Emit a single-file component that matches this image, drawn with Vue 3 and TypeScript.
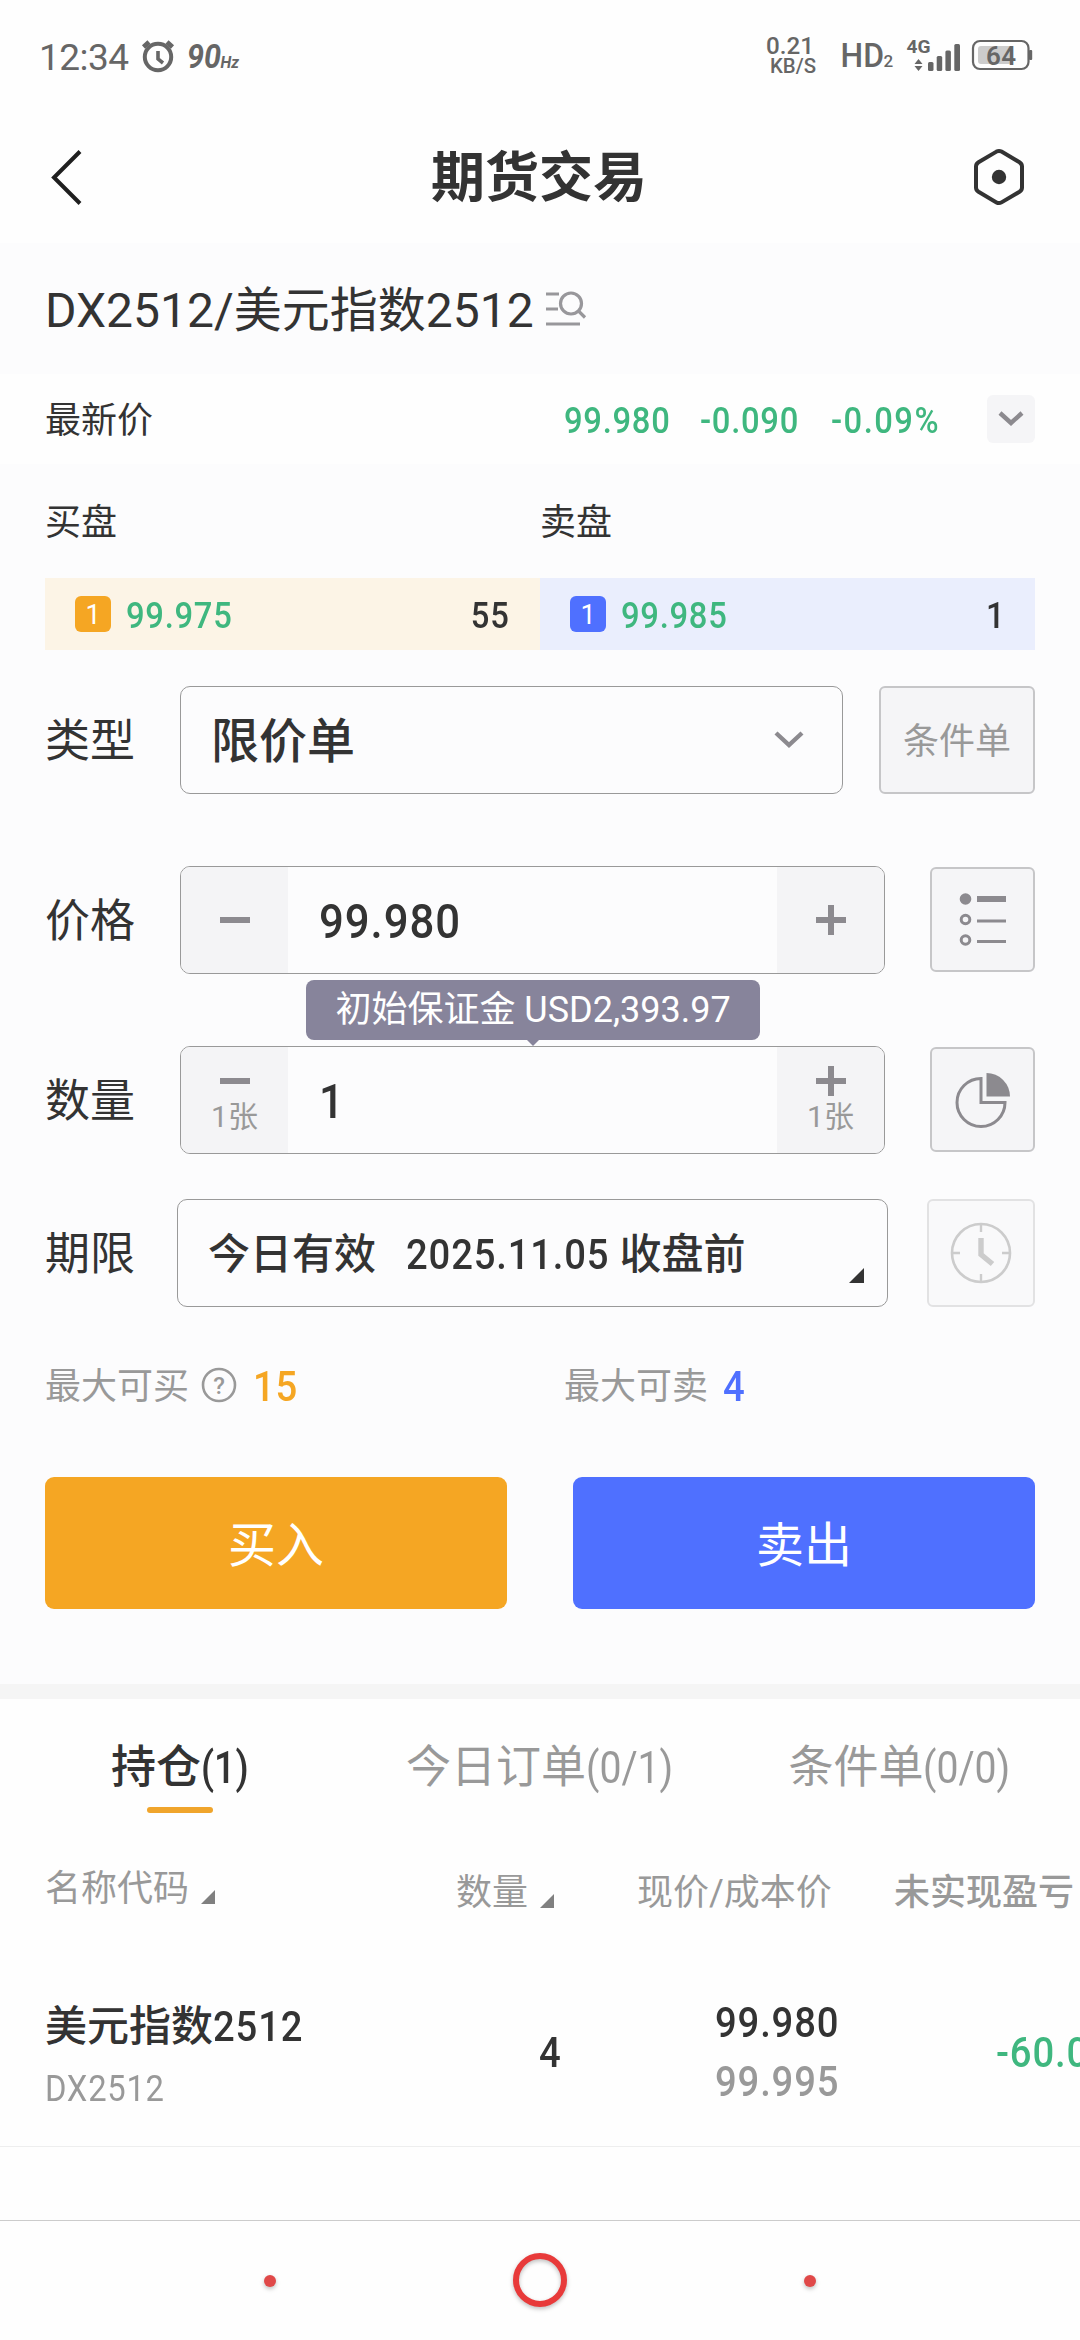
<script setup lang="ts">
interface Level {
  side: 'buy' | 'sell'
  level: number
  price: string
  volume: number
}

interface Tab {
  name: string
  count: string
  active: boolean
}

const levels: Level[] = [
  { side: 'buy', level: 1, price: '99.975', volume: 55 },
  { side: 'sell', level: 1, price: '99.985', volume: 1 },
]

const tabs: Tab[] = [
  { name: '持仓', count: '(1)', active: true },
  { name: '今日订单', count: '(0/1)', active: false },
  { name: '条件单', count: '(0/0)', active: false },
]
</script>

<template>
  <div class="screen">
    <div class="status">
      <span class="clock">12:34</span>
      <svg class="status-left" width="104" height="40" viewBox="138 36 104 40">
        <g fill="none" stroke="#666" stroke-width="4">
          <circle cx="158" cy="57" r="13.2" />
          <path d="M158 51v8l5 4" stroke-width="3.6" />
          <path d="M143.500 47l5.500-5M172.500 47l-5.500-5" stroke-width="4.600" />
        </g>
        <g fill="#666" font-family="Roboto, sans-serif" font-style="italic" font-weight="700">
          <text x="187" y="68" font-size="34" textLength="34" lengthAdjust="spacingAndGlyphs">90</text>
          <text x="220.500" y="68" font-size="17" textLength="18.500" lengthAdjust="spacingAndGlyphs">Hz</text>
        </g>
      </svg>
      <svg class="status-right" width="272" height="64" viewBox="764 24 272 64">
        <g fill="#666" font-family="Roboto, sans-serif" font-weight="500">
          <text x="766" y="54" font-size="24.500" textLength="48" lengthAdjust="spacingAndGlyphs">0.21</text>
          <text x="770" y="73" font-size="20" textLength="46" lengthAdjust="spacingAndGlyphs">KB/S</text>
          <text x="840.500" y="67" font-size="34" textLength="43.500" lengthAdjust="spacingAndGlyphs">HD</text>
          <text x="883.500" y="67" font-size="17">2</text>
          <text x="906.500" y="53" font-size="19" font-weight="700" textLength="24" lengthAdjust="spacingAndGlyphs">4G</text>
          <path d="M918.500 59l4 5h-8zM918.500 71l4-5h-8z" />
          <rect x="928" y="62" width="5.500" height="9" rx="1.500" />
          <rect x="936.700" y="56" width="5.500" height="15" rx="1.500" />
          <rect x="945.400" y="50.500" width="5.500" height="20.500" rx="1.500" />
          <rect x="954.300" y="44" width="5.700" height="27" rx="1.500" />
          <rect x="978" y="46" width="34" height="18" rx="3" fill="#ccc" />
          <rect x="973" y="41" width="55.500" height="28" rx="7" fill="none" stroke="#666" stroke-width="2.200" />
          <rect x="1029" y="50" width="3.200" height="10" rx="1" />
          <text x="986" y="65" font-size="26" font-weight="600" textLength="30">64</text>
        </g>
      </svg>
    </div>

    <header class="header">
      <svg class="back" width="40" height="60" viewBox="0 0 40 60">
        <path d="M35 4.500L9 30.500L35 56.500" fill="none" stroke="#1f1f1f" stroke-width="4" />
      </svg>
      <h1 class="title">期货交易</h1>
      <svg class="settings" width="60" height="60" viewBox="0 0 60 60">
        <path d="M27.500 4.600Q30 3.200 32.500 4.600L50.500 15.200Q53 16.800 53 19.500V40.500Q53 43.200 50.500 44.800L32.500 55.400Q30 56.800 27.500 55.400L9.500 44.800Q7 43.200 7 40.500V19.500Q7 16.800 9.500 15.200Z" fill="none" stroke="#333" stroke-width="4" />
        <circle cx="30" cy="30" r="7.200" fill="#333" />
      </svg>
    </header>

    <section class="quote">
      <span>DX2512/美元指数2512</span>
      <svg width="48" height="52" viewBox="0 0 48 52">
        <g fill="none" stroke="#98979b" stroke-width="3.200">
          <path d="M5 9h13M5 24h12M5 39h34" />
          <ellipse cx="30" cy="18.500" rx="10.500" ry="10.500" />
          <path d="M37 25.500l7 7" />
        </g>
      </svg>
    </section>

    <section class="latest">
      <span class="latest-name">最新价</span>
      <span class="price"><span class="num">99.980</span></span>
      <span class="change"><span class="num">-0.090</span></span>
      <span class="percent"><span class="num">-0.09%</span></span>
      <button class="expand">
        <svg width="26" height="16" viewBox="0 0 26 16">
          <path d="M2 2l11 10L24 2" fill="none" stroke="#8c8a8f" stroke-width="4.400" />
        </svg>
      </button>
    </section>

    <section class="form">
      <div class="book-names"><span>买盘</span><span>卖盘</span></div>
      <div class="book">
        <div v-for="l in levels" :key="l.side" class="level" :class="l.side">
          <span class="badge"><i>{{ l.level }}</i></span>
          <span class="num level-price">{{ l.price }}</span>
          <span class="num level-volume">{{ l.volume }}</span>
        </div>
      </div>

      <div class="row type-row">
        <label>类型</label>
        <div class="field select">
          <span class="value">限价单</span>
          <svg width="32" height="20" viewBox="0 0 32 20">
            <path d="M3 3l13 12L29 3" fill="none" stroke="#8c8a8f" stroke-width="4.400" />
          </svg>
        </div>
        <button class="side wide">条件单</button>
      </div>

      <div class="row">
        <label>价格</label>
        <div class="field stepper">
          <button class="step"><svg width="30" height="30" viewBox="0 0 30 30"><path d="M0 15h30" stroke="#8c8a8f" stroke-width="6" /></svg></button>
          <span class="value"><span class="num">99.980</span></span>
          <button class="step"><svg width="30" height="30" viewBox="0 0 30 30"><path d="M0 15h30M15 0v30" stroke="#8c8a8f" stroke-width="6" /></svg></button>
        </div>
        <button class="side square">
          <svg width="48" height="56" viewBox="0 0 48 56">
            <g fill="none" stroke="#8c8a8f">
              <circle cx="6.500" cy="7" r="5.800" fill="#8c8a8f" stroke="none" />
              <path d="M18 7h29" stroke-width="6" />
              <g stroke-width="3"><circle cx="6.500" cy="27.500" r="4.300" /><circle cx="6.500" cy="48" r="4.300" /><path d="M18 29h29M18 49.500h29" /></g>
            </g>
          </svg>
        </button>
      </div>

      <div class="row quantity-row">
        <label>数量</label>
        <div class="field stepper">
          <button class="step lot"><svg width="30" height="30" viewBox="0 0 30 30"><path d="M0 15h30" stroke="#8c8a8f" stroke-width="6" /></svg><span>1张</span></button>
          <span class="value"><span class="num">1</span></span>
          <button class="step lot"><svg width="30" height="30" viewBox="0 0 30 30"><path d="M0 15h30M15 0v30" stroke="#8c8a8f" stroke-width="6" /></svg><span>1张</span></button>
        </div>
        <button class="side square">
          <svg width="56" height="56" viewBox="0 0 56 56">
            <path d="M26 6.500A24 24 0 1 0 50 30.500H26Z" fill="none" stroke="#8c8a8f" stroke-width="3" />
            <path d="M31.500 1A23.500 23.500 0 0 1 55 24.500H31.500Z" fill="#8c8a8f" />
          </svg>
        </button>
        <div class="tip">初始保证金 USD2,393.97</div>
      </div>

      <div class="row term-row">
        <label>期限</label>
        <div class="field term">
          <span>今日有效</span>
          <span class="num date">2025.11.05</span>
          <span>收盘前</span>
          <svg width="15" height="15" viewBox="0 0 15 15"><path d="M15 0v15H0z" fill="#333" /></svg>
        </div>
        <button class="side muted">
          <svg width="62" height="62" viewBox="0 0 62 62">
            <g fill="none" stroke="#ccc">
              <circle cx="31" cy="31" r="29" stroke-width="2.600" />
              <path d="M31 2v8M31 52v8M2 31h8M52 31h8" stroke-width="2.400" />
              <path d="M31 16v16.500L42.500 42" stroke-width="5.400" />
            </g>
          </svg>
        </button>
      </div>

      <div class="limits">
        <div class="limit">
          <span>最大可买</span>
          <svg width="36" height="36" viewBox="0 0 36 36">
            <circle cx="18" cy="18" r="16" fill="none" stroke="#999" stroke-width="2.600" />
            <text x="18" y="26.500" text-anchor="middle" font-family="Roboto, sans-serif" font-size="24" font-weight="500" fill="#999">?</text>
          </svg>
          <b class="num max-buy">15</b>
        </div>
        <div class="limit">
          <span>最大可卖</span>
          <b class="num max-sell">4</b>
        </div>
      </div>

      <div class="actions">
        <button class="action buy-btn">买入</button>
        <button class="action sell-btn">卖出</button>
      </div>
    </section>

    <nav class="tabs">
      <div v-for="t in tabs" :key="t.name" class="tab" :class="{ active: t.active }">
        {{ t.name }}<span class="count">{{ t.count }}</span>
      </div>
    </nav>

    <section class="table">
      <div class="grid head">
        <div class="col-name">名称代码<svg width="14" height="14" viewBox="0 0 14 14"><path d="M14 0v14H0z" fill="#808080" /></svg></div>
        <div class="col-qty">数量<svg width="14" height="14" viewBox="0 0 14 14"><path d="M14 0v14H0z" fill="#808080" /></svg></div>
        <div class="col-price">现价/成本价</div>
        <div class="col-pnl">未实现盈亏</div>
      </div>
      <div class="grid position">
        <div class="col-name">
          <span class="name">美元指数<span class="num">2512</span></span>
          <span class="num code">DX2512</span>
        </div>
        <div class="col-qty"><span class="num">4</span></div>
        <div class="col-price"><span class="num">99.980</span><span class="num cost">99.995</span></div>
        <div class="col-pnl"><span class="num">-60.00</span></div>
      </div>
    </section>

    <footer class="navbar">
      <svg width="80" height="80" viewBox="0 0 80 80"><circle class="dot" cx="40" cy="41" r="6" /></svg>
      <svg width="80" height="80" viewBox="0 0 80 80"><circle class="ring" cx="40" cy="40" r="24" /></svg>
      <svg width="80" height="80" viewBox="0 0 80 80"><circle class="dot" cx="40" cy="41" r="6" /></svg>
    </footer>
  </div>
</template>

<style>
body {
  margin: 0;
  background: #fefefe;
  overflow: hidden;
}
</style>

<style scoped>
* {
  box-sizing: border-box;
}

.screen {
  display: flex;
  flex-direction: column;
  width: 1080px;
  height: 2340px;
  overflow: hidden;
  background: #fefefe;
  color: #333;
  font-family: Roboto, "Noto Sans CJK SC", sans-serif;
  font-size: 36px;
  line-height: 1;
  white-space: nowrap;
}

svg {
  display: block;
  flex: none;
}

button {
  display: flex;
  align-items: center;
  justify-content: center;
  padding: 0;
  border: 0;
  font: inherit;
  color: inherit;
}

/* Narrow, slightly spaced figures */
.num {
  display: inline-block;
  font-weight: 500;
  letter-spacing: 0.022em;
  transform: scaleX(0.91);
  transform-origin: left center;
}

.status {
  display: flex;
  align-items: center;
  height: 112px;
  padding: 0 44px 0 39px;
  color: #666;
}

.clock {
  width: 99px;
  padding-top: 2px;
  font-size: 37px;
  letter-spacing: -0.5px;
}

.status-right {
  margin-left: auto;
}

.header {
  display: flex;
  align-items: center;
  justify-content: space-between;
  height: 131px;
  padding: 0 51px 2px 45px;
}

.back {
  margin-right: 24px;
}

.title {
  margin: 0;
  padding-top: 5px;
  font-size: 54px;
  font-weight: 700;
}

.quote {
  display: flex;
  align-items: center;
  gap: 7px;
  height: 131px;
  padding: 4px 45px 0;
  background: #fcfcfd;
  font-size: 48px;
}

.latest {
  display: flex;
  align-items: center;
  height: 90px;
  padding-left: 45px;
  color: #3fb77f;
}

.latest > span {
  padding-top: 3px;
}

.latest-name {
  width: 519px;
  color: #333;
}

.price {
  width: 136px;
}

.change {
  width: 131px;
}

.percent {
  width: 156px;
}

.percent .num {
  letter-spacing: 0.045em;
}

.expand {
  width: 48px;
  height: 48px;
  border-radius: 6px;
  background: #f5f5f7;
}

.form {
  height: 1220px;
  padding: 0 45px;
  background: #fcfcfd;
}

.book-names {
  display: flex;
  align-items: center;
  height: 114px;
  padding-top: 3px;
}

.book-names span {
  flex: 1;
}

.book {
  display: flex;
  height: 72px;
}

.level {
  display: flex;
  align-items: center;
  flex: 1;
  padding: 0 30px;
}

.level.buy {
  background: #fcf4e6;
}

.level.sell {
  background: #eaeefd;
}

.badge {
  display: flex;
  align-items: center;
  justify-content: center;
  width: 36px;
  height: 36px;
  margin-right: 15px;
  border-radius: 6px;
  background: #f5a623;
  color: #fff;
  font-size: 27px;
}

.badge i {
  padding-top: 2px;
  font-style: normal;
}

.sell .badge {
  background: #4f70ff;
}

.level-price {
  padding-top: 3px;
  color: #3fb77f;
}

.level-volume {
  margin-left: auto;
  padding-top: 3px;
  transform-origin: right center;
}

.row {
  position: relative;
  display: flex;
  align-items: center;
  height: 108px;
  margin-top: 72px;
}

.row.type-row {
  margin-top: 36px;
}

.row.term-row {
  margin-top: 45px;
}

.row label {
  width: 135px;
  padding-top: 3px;
  font-size: 45px;
}

.term-row label {
  width: 132px;
}

.field {
  display: flex;
  align-items: center;
  height: 108px;
  border: 1px solid #999;
  border-radius: 10px;
  overflow: hidden;
}

.value {
  padding-top: 4px;
  font-size: 48px;
  font-weight: 500;
}

.select {
  justify-content: space-between;
  width: 663px;
  padding: 0 37px 0 30px;
}

.stepper {
  width: 705px;
}

.step {
  width: 107px;
  height: 106px;
  background: #f4f4f6;
}

.stepper .value {
  flex: 1;
  padding-left: 31px;
}

.lot {
  flex-direction: column;
  justify-content: flex-start;
  padding-top: 19px;
  color: #999;
  font-size: 30px;
}

.lot span {
  margin-top: 6px;
}

.side {
  height: 108px;
  margin-left: auto;
  border: 2px solid #c6c6c8;
  border-radius: 6px;
  background: #f5f5f7;
  color: #999;
}

.wide {
  width: 156px;
  padding-top: 3px;
}

.square {
  width: 105px;
  height: 105px;
  margin-bottom: 1px;
}

.side.muted {
  width: 108px;
  border-color: #e2e2e3;
  background: #f9f9fa;
}

.tip {
  position: absolute;
  left: 261px;
  top: -66px;
  width: 454px;
  height: 60px;
  border-radius: 8px;
  background: #87849b;
  color: #fff;
  line-height: 60px;
  text-align: center;
}

.tip::after {
  content: "";
  position: absolute;
  left: 221px;
  top: 60px;
  border: 6px solid transparent;
  border-top-color: #87849b;
  border-bottom-width: 0;
}

.term {
  width: 711px;
  padding: 0 23px 0 30px;
  font-size: 42px;
  font-weight: 500;
}

.term span {
  padding-top: 4px;
}

.term .date {
  margin: 0 -10px 0 30px;
}

.term svg {
  margin: 44px 0 0 auto;
}

.limits {
  display: flex;
  align-items: center;
  height: 156px;
  color: #999;
}

.limit {
  display: flex;
  align-items: center;
  flex: none;
  width: 519px;
}

.limit span {
  padding-top: 3px;
}

.limit svg {
  margin: 0 16px 0 12px;
}

.limit b {
  padding-top: 3px;
  font-size: 42px;
}

.max-buy {
  color: #f5a623;
}

.limit .max-sell {
  margin-left: 15px;
  color: #4f70ff;
}

.actions {
  display: flex;
  justify-content: space-between;
  margin-top: 14px;
}

.action {
  width: 462px;
  height: 132px;
  padding-top: 5px;
  border-radius: 9px;
  color: #fff;
  font-size: 48px;
}

.buy-btn {
  background: #f5a623;
}

.sell-btn {
  background: #4f70ff;
}

.tabs {
  display: flex;
  height: 129px;
  border-top: 15px solid #f5f5f5;
}

.tab {
  display: flex;
  align-items: center;
  justify-content: center;
  position: relative;
  width: 360px;
  padding-bottom: 24px;
  padding-top: 46px;
  height: 114px;
  color: #999;
  font-size: 45px;
}

.count {
  margin-right: -12px;
  transform: scaleX(0.87);
  transform-origin: left center;
}

.active {
  color: #333;
  font-weight: 500;
}

.active .count {
  margin-right: -9px;
  transform: scaleX(0.84);
}

.active::after {
  content: "";
  position: absolute;
  left: 147px;
  bottom: 0;
  width: 66px;
  height: 6px;
  border-radius: 3px;
  background: #f0a52c;
}

.grid {
  display: grid;
  grid-template-columns: 411px 181px 257px 300px;
  padding-left: 45px;
}

.head {
  height: 148px;
  align-items: center;
  color: #999;
}

.head > div {
  display: flex;
  align-items: center;
  padding-top: 11px;
}

.head .col-name {
  padding-top: 3px;
}

.head svg {
  margin: 17px 0 0 12px;
}

.head .col-pnl {
  font-weight: 500;
}

.position {
  height: 186px;
  align-items: center;
  border-bottom: 1px solid #eee;
  font-size: 42px;
}

.position .col-name {
  display: flex;
  flex-direction: column;
  gap: 23px;
  padding-top: 5px;
}

.name {
  font-weight: 500;
}

.code {
  color: #999;
  font-size: 36px;
  font-weight: 400;
}

.position .col-qty {
  padding: 0 0 2px 83px;
}

.position .col-price {
  display: flex;
  flex-direction: column;
  align-items: flex-start;
  gap: 17px;
  padding: 0 0 2px 78px;
}

.cost {
  color: #999;
}

.position .col-pnl {
  padding: 0 0 2px 102px;
  color: #3fb77f;
}

.navbar {
  display: flex;
  align-items: center;
  justify-content: space-between;
  height: 120px;
  margin-top: auto;
  padding: 0 230px 2px;
  border-top: 1px solid #ccc;
}

.dot {
  fill: #e04848;
  filter: drop-shadow(0 2px 2px rgba(0, 0, 0, 0.25));
}

.ring {
  fill: none;
  stroke: #e83a3a;
  stroke-width: 6;
  filter: drop-shadow(0 2px 2px rgba(0, 0, 0, 0.25));
}
</style>
